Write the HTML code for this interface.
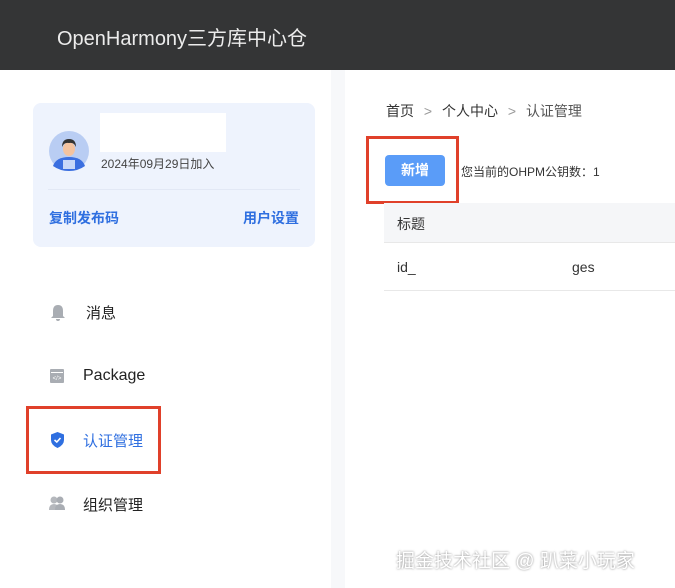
<!DOCTYPE html>
<html><head><meta charset="utf-8"><style>
*{margin:0;padding:0;box-sizing:border-box}
body{width:675px;height:588px;overflow:hidden;background:#f7f8fa;font-family:"Liberation Sans","Noto Sans CJK SC",sans-serif;position:relative;color:#222}
.a{position:absolute;white-space:nowrap}
</style></head><body>
<div class="a" style="left:0;top:0;width:675px;height:70px;background:#343536"></div>
<div class="a" style="left:57px;top:22px;font-size:20px;color:#ececec">OpenHarmony三方库中心仓</div>
<div class="a" style="left:0;top:70px;width:331px;height:518px;background:#fff"></div>
<div class="a" style="left:345px;top:70px;width:330px;height:518px;background:#fff"></div>
<div class="a" style="left:33px;top:103px;width:282px;height:144px;background:#eef3fd;border-radius:8px"></div>
<svg class="a" style="left:48px;top:130px" width="42" height="42" viewBox="0 0 42 42"><circle cx="21" cy="21" r="20" fill="#b9cdf3"/><path d="M5 36 Q8 27 21 27 Q34 27 37 36 Q30 41 21 41 Q12 41 5 36Z" fill="#3b6fe0"/><rect x="15" y="30" width="12" height="9" fill="#c8d8f8"/><ellipse cx="21" cy="19" rx="6" ry="7" fill="#f3c3a0"/><path d="M14 17 Q14 9 21 9 Q28 9 28 17 Q26 12 21 13 Q16 12 14 17Z" fill="#333"/></svg>
<div class="a" style="left:100px;top:113px;width:126px;height:39px;background:#fff"></div>
<div class="a" style="left:101px;top:155px;font-size:12px;color:#444">2024年09月29日加入</div>
<div class="a" style="left:48px;top:189px;width:252px;height:1px;background:#e2e8f5"></div>
<div class="a" style="left:49px;top:208px;font-size:14px;color:#2f6fe0;font-weight:bold">复制发布码</div>
<div class="a" style="left:243px;top:208px;font-size:14px;color:#2f6fe0;font-weight:bold">用户设置</div>
<svg class="a" style="left:50px;top:304px" width="16" height="18" viewBox="0 0 16 18"><path d="M8 1 Q3 1 3 7 L3 12 L1 14 L15 14 L13 12 L13 7 Q13 1 8 1Z M6 15 L10 15 Q10 17 8 17 Q6 17 6 15Z" fill="#a9adb3"/></svg>
<div class="a" style="left:86px;top:302px;font-size:15px">消息</div>
<svg class="a" style="left:49px;top:368px" width="16" height="16" viewBox="0 0 16 16"><rect x="1" y="1" width="14" height="14" rx="1" fill="#a9adb3"/><rect x="2" y="4" width="12" height="1" fill="#fff"/><text x="8" y="12" font-size="6" fill="#fff" text-anchor="middle">&lt;/&gt;</text></svg>
<div class="a" style="left:83px;top:367px;font-size:16px">Package</div>
<svg class="a" style="left:50px;top:431px" width="15" height="18" viewBox="0 0 15 18"><path d="M7.5 1 L14 3.5 L14 9 Q14 14 7.5 17 Q1 14 1 9 L1 3.5Z" fill="#2f6fe0"/><path d="M4.5 9 L6.8 11 L10.5 7" stroke="#fff" stroke-width="1.6" fill="none"/></svg>
<div class="a" style="left:83px;top:430px;font-size:15px;color:#2f6fe0">认证管理</div>
<svg class="a" style="left:48px;top:495px" width="18" height="16" viewBox="0 0 18 16"><circle cx="6" cy="5" r="3.5" fill="#b5b8bd"/><circle cx="12" cy="5" r="3.5" fill="#a9adb3"/><path d="M1 15 Q1 9 6 9 Q11 9 11 15Z" fill="#b5b8bd"/><path d="M7 15 Q7 9 12 9 Q17 9 17 15Z" fill="#a9adb3"/></svg>
<div class="a" style="left:83px;top:494px;font-size:15px">组织管理</div>
<div class="a" style="left:26px;top:406px;width:135px;height:68px;border:3px solid #e0402a"></div>
<div class="a" style="left:386px;top:101px;font-size:14px;color:#333">首页 <span style="color:#999;margin:0 6px">&gt;</span> 个人中心 <span style="color:#999;margin:0 6px">&gt;</span> <span style="color:#555">认证管理</span></div>
<div class="a" style="left:385px;top:155px;width:60px;height:31px;background:#5a9cf8;border-radius:4px;color:#fff;font-size:14px;text-align:center;line-height:31px;font-weight:bold">新增</div>
<div class="a" style="left:461px;top:163px;font-size:12px;color:#333">您当前的OHPM公钥数：1</div>
<div class="a" style="left:366px;top:136px;width:93px;height:68px;border:3px solid #e0402a"></div>
<div class="a" style="left:384px;top:203px;width:291px;height:40px;background:#f5f6f8;border-bottom:1px solid #e8e8e8"></div>
<div class="a" style="left:397px;top:214px;font-size:14px;color:#333">标题</div>
<div class="a" style="left:384px;top:290px;width:291px;height:1px;background:#e8e8e8"></div>
<div class="a" style="left:397px;top:259px;font-size:14px;color:#333">id_</div>
<div class="a" style="left:572px;top:259px;font-size:14px;color:#333">ges</div>
<div class="a" style="left:396px;top:546px;font-size:19px;color:#fff;text-shadow:0 0 2px rgba(0,0,0,.5)">掘金技术社区 @ 趴菜小玩家</div>
</body></html>
